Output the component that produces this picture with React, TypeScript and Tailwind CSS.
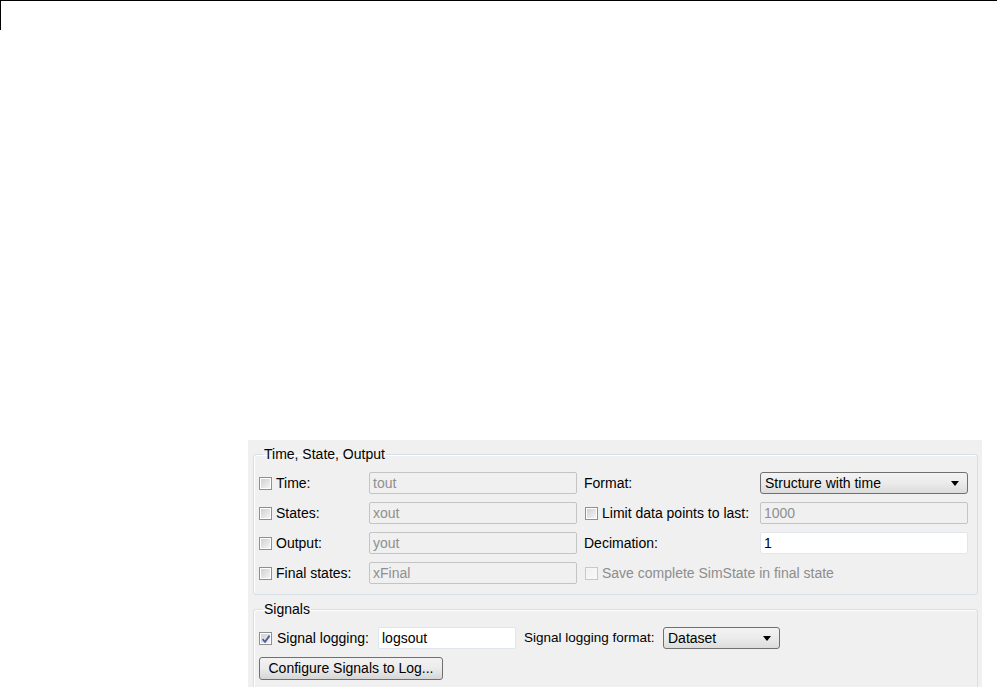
import React from 'react';

const font = { fontFamily: '"Liberation Sans", Arial, sans-serif' };

function CheckBox({ checked = false, disabled = false }: { checked?: boolean; disabled?: boolean }) {
  return (
    <span
      className={`relative flex h-[13px] w-[13px] shrink-0 items-center justify-center border ${
        disabled ? 'border-[#c8c8c8] bg-[#f6f6f6]' : 'border-[#8e8f8f] bg-white'
      }`}
    >
      <span
        className={`block h-[9px] w-[9px] bg-gradient-to-br ${
          disabled ? 'from-[#f0f0f0] to-[#f8f8f8]' : 'from-[#cfd1d4] to-[#f4f4f4]'
        }`}
      />
      {checked && (
        <svg className="absolute left-[1px] top-[1px]" width="10" height="10" viewBox="0 0 10 10">
          <path d="M1.5 5.2 L4 7.8 L8.6 1.6" fill="none" stroke="#4b5f95" strokeWidth="1.8" />
        </svg>
      )}
    </span>
  );
}

function TextBox({ value, disabled = false, width }: { value: string; disabled?: boolean; width: string }) {
  return (
    <div
      className={`flex h-[22px] items-center rounded-[2px] border px-[3px] ${width} ${
        disabled ? 'border-[#c4c4c4] bg-[#f0f0f0] text-[#8f8f8f]' : 'border-[#e0e6ec] bg-white text-black'
      }`}
    >
      {value}
    </div>
  );
}

function DropDown({ value, width }: { value: string; width: string }) {
  return (
    <div
      className={`flex h-[22px] items-center justify-between rounded-[3px] border border-[#707070] bg-gradient-to-b from-[#f3f3f3] via-[#ebebeb] to-[#dcdcdc] pl-[4px] pr-[8px] text-black ${width}`}
    >
      <span>{value}</span>
      <svg width="8" height="5" viewBox="0 0 8 5">
        <path d="M0 0 H8 L4 5 Z" fill="#000" />
      </svg>
    </div>
  );
}

function GroupBox({ title, children, extra = '' }: { title: string; children: React.ReactNode; extra?: string }) {
  return (
    <fieldset
      className={`rounded-[3px] border border-[#d5dfe5] pl-[5px] pr-[9px] shadow-[inset_1px_1px_0_#ffffff] ${extra}`}
    >
      <legend className="ml-[4px] px-[1px] leading-[16px] text-black">{title}</legend>
      {children}
    </fieldset>
  );
}

export default function App() {
  const leftRows = [
    { label: 'Time:', value: 'tout' },
    { label: 'States:', value: 'xout' },
    { label: 'Output:', value: 'yout' },
    { label: 'Final states:', value: 'xFinal' },
  ];

  return (
    <div className="h-[687px] w-[997px] overflow-hidden bg-white" style={font}>
      <div className="h-[30px] border-l border-t border-black" />

      <div className="ml-[248px] mt-[410px] w-[734px] bg-[#f0f0f0] pl-[5px] pr-[4px] pt-[6px] text-[14px] text-black">
        <GroupBox title="Time, State, Output" extra="pt-[10px] pb-[10px]">
          <div className="grid grid-cols-[110px_208px_183px_208px] gap-y-[8px]">
            {leftRows.map((row, i) => (
              <React.Fragment key={row.label}>
                <div className="flex h-[22px] items-center gap-[4px]">
                  <CheckBox />
                  <span>{row.label}</span>
                </div>
                <TextBox value={row.value} disabled width="w-[208px]" />
                {i === 0 && (
                  <>
                    <div className="flex h-[22px] items-center pl-[7px]">Format:</div>
                    <DropDown value="Structure with time" width="w-[208px]" />
                  </>
                )}
                {i === 1 && (
                  <>
                    <div className="flex h-[22px] items-center gap-[4px] pl-[8px]">
                      <CheckBox />
                      <span>Limit data points to last:</span>
                    </div>
                    <TextBox value="1000" disabled width="w-[208px]" />
                  </>
                )}
                {i === 2 && (
                  <>
                    <div className="flex h-[22px] items-center pl-[7px]">Decimation:</div>
                    <TextBox value="1" width="w-[208px]" />
                  </>
                )}
                {i === 3 && (
                  <div className="col-span-2 flex h-[22px] items-center gap-[4px] pl-[8px] text-[#8d8d8d]">
                    <CheckBox disabled />
                    <span>Save complete SimState in final state</span>
                  </div>
                )}
              </React.Fragment>
            ))}
          </div>
        </GroupBox>

        <GroupBox title="Signals" extra="mt-[6px] pt-[10px] pb-[40px]">
          <div className="flex flex-col items-start gap-[8px]">
            <div className="flex h-[22px] items-center">
              <CheckBox checked />
              <span className="ml-[5px] w-[101px]">Signal logging:</span>
              <TextBox value="logsout" width="w-[138px]" />
              <span className="ml-[8px] w-[139px] text-[13.5px]">Signal logging format:</span>
              <DropDown value="Dataset" width="w-[117px]" />
            </div>
            <button className="flex h-[23px] w-[184px] items-center justify-center rounded-[3px] border border-[#707070] bg-gradient-to-b from-[#f2f2f2] via-[#ebebeb] to-[#d6d6d6] text-black">
              Configure Signals to Log...
            </button>
          </div>
        </GroupBox>
      </div>
    </div>
  );
}
